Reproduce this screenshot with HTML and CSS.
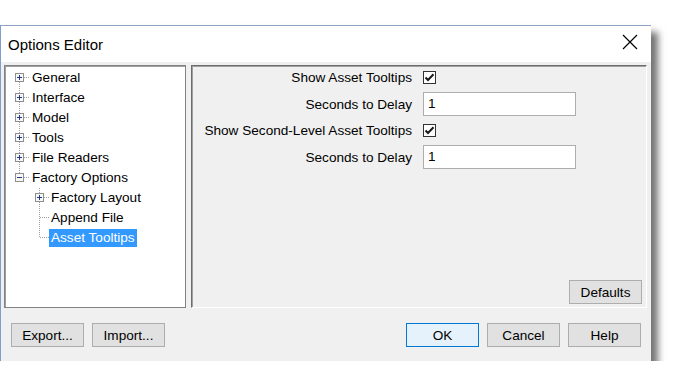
FILE: index.html
```html
<!DOCTYPE html>
<html>
<head>
<meta charset="utf-8">
<link rel="stylesheet" href="styles.css">
</head>
<body>
<svg class="defs" width="0" height="0">
  <defs>
    <g id="plus">
      <rect x="5.5" y="5.5" width="8" height="8" fill="#f7f7f7" stroke="#8f8f8f"/>
      <path d="M7 9.5h5M9.5 7v5" stroke="#1e3c8c" stroke-width="1"/>
    </g>
    <g id="minus">
      <rect x="5.5" y="5.5" width="8" height="8" fill="#f7f7f7" stroke="#8f8f8f"/>
      <path d="M7 9.5h5" stroke="#1e3c8c" stroke-width="1"/>
    </g>
    <path id="hr" d="M14 9.5h6" stroke="#a0a0a0" stroke-dasharray="1 1"/>
    <path id="hrf" d="M10 9.5h10" stroke="#a0a0a0" stroke-dasharray="1 1"/>
    <path id="up" d="M9.5 0v5" stroke="#a0a0a0" stroke-dasharray="1 1"/>
    <path id="dn" d="M9.5 14v6" stroke="#a0a0a0" stroke-dasharray="1 1"/>
    <path id="vup" d="M9.5 0v10" stroke="#a0a0a0" stroke-dasharray="1 1"/>
    <path id="vfull" d="M9.5 0v20" stroke="#a0a0a0" stroke-dasharray="1 1"/>
  </defs>
</svg>
<div class="dialog">
  <div class="titlebar">
    <span class="title">Options Editor</span>
    <svg class="close" width="16" height="16" viewBox="0 0 16 16"><path d="M1 1L15 15M15 1L1 15" stroke="#000" stroke-width="1.2"/></svg>
  </div>
  <div class="main">
    <div class="panels">
      <div class="tree">
        <div class="row"><svg class="cell" width="20" height="20"><use href="#dn"/><use href="#hr"/><use href="#plus"/></svg><span class="label">General</span></div>
        <div class="row"><svg class="cell" width="20" height="20"><use href="#up"/><use href="#dn"/><use href="#hr"/><use href="#plus"/></svg><span class="label">Interface</span></div>
        <div class="row"><svg class="cell" width="20" height="20"><use href="#up"/><use href="#dn"/><use href="#hr"/><use href="#plus"/></svg><span class="label">Model</span></div>
        <div class="row"><svg class="cell" width="20" height="20"><use href="#up"/><use href="#dn"/><use href="#hr"/><use href="#plus"/></svg><span class="label">Tools</span></div>
        <div class="row"><svg class="cell" width="20" height="20"><use href="#up"/><use href="#dn"/><use href="#hr"/><use href="#plus"/></svg><span class="label">File Readers</span></div>
        <div class="row"><svg class="cell" width="20" height="20"><use href="#up"/><use href="#hr"/><use href="#minus"/></svg><span class="label">Factory Options</span></div>
        <div class="row child"><span class="blank"></span><svg class="cell" width="20" height="20"><use href="#up"/><use href="#dn"/><use href="#hr"/><use href="#plus"/></svg><span class="label">Factory Layout</span></div>
        <div class="row child"><span class="blank"></span><svg class="cell" width="20" height="20"><use href="#vfull"/><use href="#hrf"/></svg><span class="label">Append File</span></div>
        <div class="row child"><span class="blank"></span><svg class="cell" width="20" height="20"><use href="#vup"/><use href="#hrf"/></svg><span class="label selected">Asset Tooltips</span></div>
      </div>
      <div class="content">
        <div class="form">
          <span class="flabel">Show Asset Tooltips</span>
          <span class="check"><svg width="11" height="11" viewBox="0 0 11 11"><path d="M1.5 5.5L4 8L9.5 2.2" fill="none" stroke="#1a1a1a" stroke-width="2"/></svg></span>
          <span class="flabel">Seconds to Delay</span>
          <span class="input">1</span>
          <span class="flabel">Show Second-Level Asset Tooltips</span>
          <span class="check"><svg width="11" height="11" viewBox="0 0 11 11"><path d="M1.5 5.5L4 8L9.5 2.2" fill="none" stroke="#1a1a1a" stroke-width="2"/></svg></span>
          <span class="flabel">Seconds to Delay</span>
          <span class="input">1</span>
        </div>
        <div class="content-foot"><button class="btn">Defaults</button></div>
      </div>
    </div>
    <div class="buttons">
      <div class="group">
        <button class="btn">Export...</button>
        <button class="btn">Import...</button>
      </div>
      <div class="group">
        <button class="btn default">OK</button>
        <button class="btn">Cancel</button>
        <button class="btn">Help</button>
      </div>
    </div>
  </div>
</div>
</body>
</html>
```
FILE: styles.css
```css
* { box-sizing: border-box; }
html, body { margin: 0; padding: 0; background: #fff; }
body {
  font-family: "Liberation Sans", Arial, sans-serif;
  font-size: 13.6px;
  color: #000;
  padding-top: 25px;
}
.defs { display: block; width: 0; height: 0; overflow: hidden; }
.dialog {
  width: 651px;
  height: 336px;
  background: #f0f0f0;
  border-left: 1px solid #7f9dcf;
  border-top: 1px solid #8ea3c4;
  box-shadow: 7px 7px 7px rgba(0,0,0,0.55);
  display: flex;
  flex-direction: column;
}
.titlebar {
  height: 36px;
  background: #fff;
  display: flex;
  align-items: center;
  justify-content: space-between;
  padding: 0 13px 0 7px;
}
.title { font-size: 15px; padding-top: 1px; }
.close { display: block; margin-top: -5px; }
.main {
  flex: 1;
  display: flex;
  flex-direction: column;
  padding: 3px 3px 0 3px;
}
.panels {
  display: flex;
  gap: 5px;
  height: 243px;
}
.tree {
  width: 182px;
  background: #fff;
  border: 1px solid #828282;
  box-shadow: inset 1px 1px 0 #a0a0a0;
  padding: 2px 0 0 5px;
}
.row {
  display: flex;
  align-items: center;
  height: 20px;
}
.cell { display: block; flex: none; }
.blank { width: 20px; flex: none; }
.label {
  padding: 0 2px;
  height: 18px;
  line-height: 18px;
  white-space: nowrap;
}
.child .label { margin-left: -1px; }
.selected { background: #3399ff; color: #fff; }
.content {
  width: 456px;
  border: 1px solid #a0a0a0;
  border-top-color: #6d6d6d;
  border-left-color: #6d6d6d;
  border-right-color: #fff;
  border-bottom-color: #fff;
  box-shadow: inset 1px 1px 0 #a0a0a0;
  display: flex;
  flex-direction: column;
  justify-content: space-between;
  padding: 4px 4px 3px 1px;
}
.form {
  display: grid;
  grid-template-columns: 219px 153px;
  grid-template-rows: 13px 24px 13px 24px;
  column-gap: 11px;
  row-gap: 8px;
  align-items: center;
  padding-top: 1px;
}
.flabel { text-align: right; white-space: nowrap; }
.check {
  width: 13px;
  height: 13px;
  border: 1px solid #333;
  background: #fff;
  display: flex;
  align-items: center;
  justify-content: center;
}
.check svg { display: block; }
.input {
  height: 24px;
  background: #fff;
  border: 1px solid #adadad;
  padding: 0 4px;
  line-height: 22px;
}
.content-foot { display: flex; justify-content: flex-end; }
.btn {
  width: 73px;
  height: 24px;
  background: #e1e1e1;
  border: 1px solid #adadad;
  font-family: "Liberation Sans", Arial, sans-serif;
  font-size: 13.6px;
  color: #000;
  padding: 0;
}
.btn.default { border-color: #0078d7; background: #e5f1fb; }
.buttons {
  display: flex;
  justify-content: space-between;
  padding: 15px 7px 0 7px;
}
.group { display: flex; gap: 8px; }
```
